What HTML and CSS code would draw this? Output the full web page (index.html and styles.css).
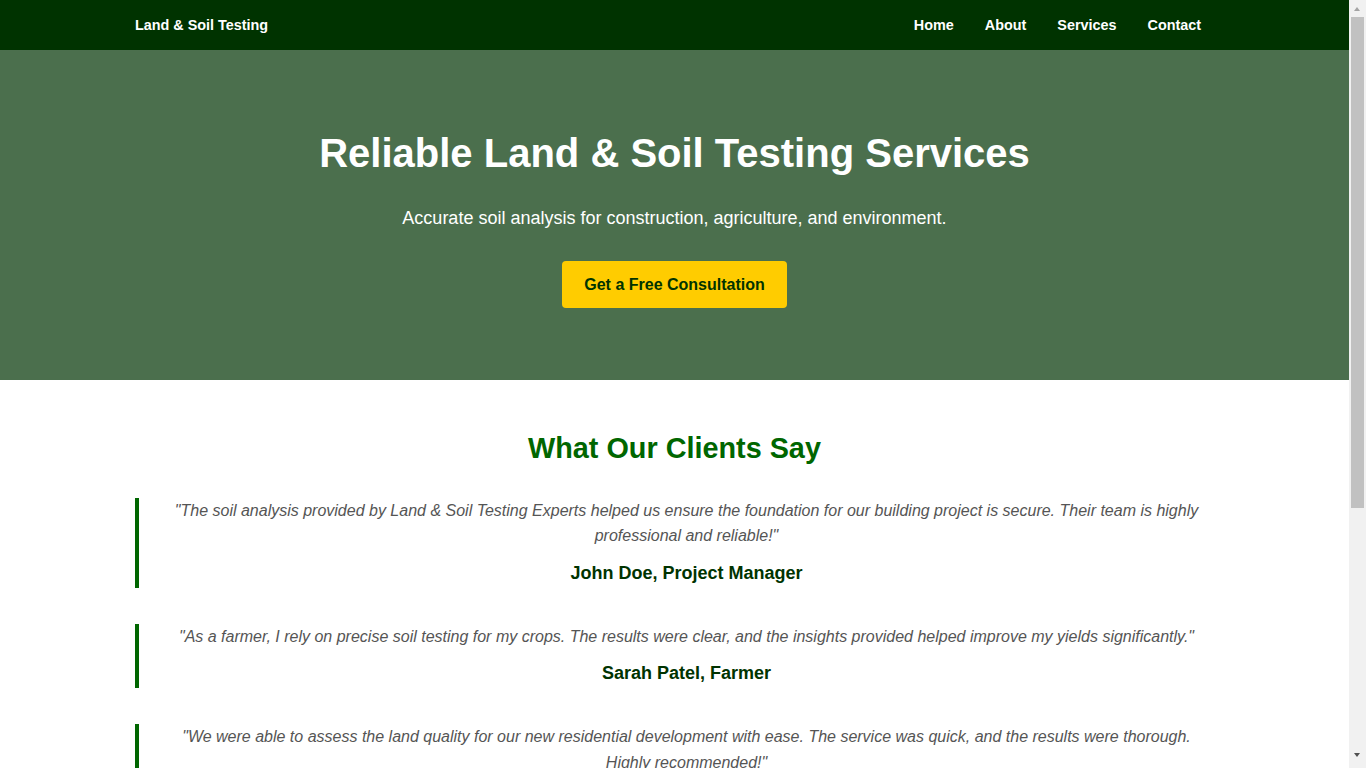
FILE: index.html
```html
<!DOCTYPE html>
<html lang="en">
<head>
<meta charset="UTF-8">
<title>Land &amp; Soil Testing</title>
<link rel="stylesheet" href="styles.css">
</head>
<body>
<header class="navbar">
  <div class="container nav-inner">
    <div class="logo">Land &amp; Soil Testing</div>
    <ul class="nav-links">
      <li><a href="#">Home</a></li>
      <li><a href="#">About</a></li>
      <li><a href="#">Services</a></li>
      <li><a href="#">Contact</a></li>
    </ul>
  </div>
</header>

<section class="hero">
  <h1>Reliable Land &amp; Soil Testing Services</h1>
  <p class="hero-sub">Accurate soil analysis for construction, agriculture, and environment.</p>
  <div class="hero-cta">
    <a class="btn" href="#">Get a Free Consultation</a>
  </div>
</section>

<section class="testimonials">
  <div class="container">
    <h2 class="section-title">What Our Clients Say</h2>
    <div class="testimonial">
      <p class="quote">"The soil analysis provided by Land &amp; Soil Testing Experts helped us ensure the foundation for our building project is secure. Their team is highly professional and reliable!"</p>
      <p class="author">John Doe, Project Manager</p>
    </div>
    <div class="testimonial">
      <p class="quote">"As a farmer, I rely on precise soil testing for my crops. The results were clear, and the insights provided helped improve my yields significantly."</p>
      <p class="author">Sarah Patel, Farmer</p>
    </div>
    <div class="testimonial">
      <p class="quote">"We were able to assess the land quality for our new residential development with ease. The service was quick, and the results were thorough. Highly recommended!"</p>
      <p class="author">Michael Lee, Real Estate Developer</p>
    </div>
  </div>
</section>

<section class="contact">
  <div class="container">
    <h2 class="section-title">Contact Us</h2>
    <p class="contact-text">Email: info@landsoiltesting.com | Phone: (555) 123-4567</p>
  </div>
</section>

<footer class="footer">
  <p>&copy; 2024 Land &amp; Soil Testing. All rights reserved.</p>
</footer>

<div class="fake-scrollbar" aria-hidden="true">
  <span class="sb-arrow sb-up"></span>
  <span class="sb-thumb"></span>
  <span class="sb-arrow sb-down"></span>
</div>
</body>
</html>
```

FILE: styles.css
```css
* {
  box-sizing: border-box;
}

body {
  margin: 0 17px 0 0;
  font-family: "Liberation Sans", Arial, Helvetica, sans-serif;
  line-height: 1.6;
  color: #333;
  background: #ffffff;
}

.container {
  width: 80%;
  margin: 0 auto;
}

.navbar {
  background: #003300;
}

.nav-inner {
  display: flex;
  justify-content: space-between;
  align-items: center;
  height: 50px;
}

.logo {
  color: #ffffff;
  font-weight: bold;
  font-size: 14.4px;
  padding-top: 2px;
}

.nav-links {
  display: flex;
  gap: 31px;
  list-style: none;
  margin: 0 13px 0 0;
  padding: 0 0 1px;
}

.nav-links a {
  color: #ffffff;
  text-decoration: none;
  font-weight: bold;
  font-size: 14.4px;
}

.hero {
  background: #4b6f4d;
  color: #ffffff;
  text-align: center;
  padding: 71px 20px 72px;
}

.hero h1 {
  font-size: 40px;
  margin: 0 0 19px;
}

.hero-sub {
  font-size: 18px;
  margin: 0 0 28px;
}

.hero-cta {
  display: flex;
  justify-content: center;
}

.btn {
  display: inline-block;
  background: #ffcc00;
  color: #003300;
  font-weight: bold;
  font-size: 16px;
  line-height: 25px;
  padding: 11px 22px;
  border-radius: 4px;
  text-decoration: none;
}

.testimonials {
  padding: 45px 0 10px;
}

.section-title {
  color: #006600;
  font-size: 28.8px;
  text-align: center;
  margin: 0 0 27px;
}

.testimonial {
  border-left: 4px solid #006600;
  padding: 0 0 0 20px;
  margin-bottom: 36px;
  text-align: center;
}

.quote {
  font-style: italic;
  color: #555555;
  font-size: 16px;
  margin: 0;
}

.author {
  color: #003300;
  font-weight: bold;
  font-size: 18px;
  margin: 10px 0 0;
}

.contact {
  padding: 30px 0 50px;
  text-align: center;
}

.contact .section-title {
  margin-bottom: 16px;
}

.contact-text {
  margin: 0;
  color: #555555;
}

.footer {
  background: #003300;
  color: #ffffff;
  text-align: center;
  padding: 16px 0;
  font-size: 14px;
}

.footer p {
  margin: 0;
}

/* Drawn browser scrollbar (overlays the right edge of the window) */
.fake-scrollbar {
  position: fixed;
  top: 0;
  right: 0;
  width: 17px;
  height: 100vh;
  background: #f1f1f1;
}

.sb-thumb {
  position: absolute;
  left: 2px;
  top: 17px;
  width: 13px;
  height: 491px;
  background: #c1c1c1;
}

.sb-arrow {
  position: absolute;
  left: 5px;
  width: 0;
  height: 0;
  border-left: 3.5px solid transparent;
  border-right: 3.5px solid transparent;
}

.sb-up {
  top: 7px;
  border-bottom: 4px solid #a3a3a3;
}

.sb-down {
  bottom: 11px;
  border-top: 4px solid #505050;
}
```
